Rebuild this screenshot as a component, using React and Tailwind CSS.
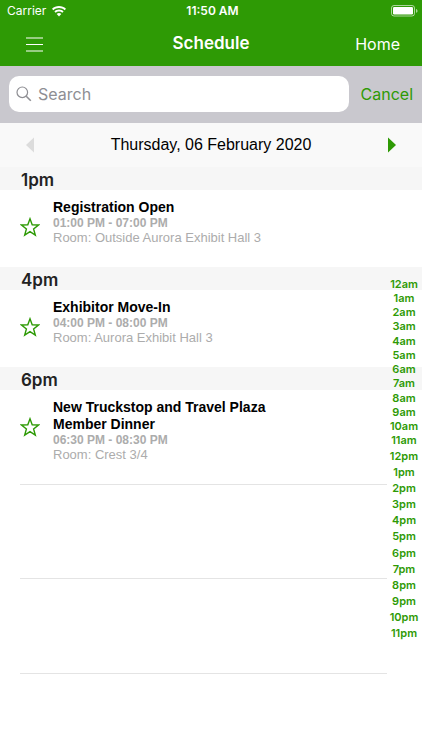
import { useState } from 'react';

const SECTIONS = [
  {
    label: '1pm',
    events: [{ id: 1, title: 'Registration Open', time: '01:00 PM - 07:00 PM', room: 'Outside Aurora Exhibit Hall 3' }],
  },
  {
    label: '4pm',
    events: [{ id: 2, title: 'Exhibitor Move-In', time: '04:00 PM - 08:00 PM', room: 'Aurora Exhibit Hall 3' }],
  },
  {
    label: '6pm',
    events: [{ id: 3, title: 'New Truckstop and Travel Plaza Member Dinner', time: '06:30 PM - 08:30 PM', room: 'Crest 3/4' }],
  },
];

const HOURS = [12, 1, 2, 3, 4, 5, 6, 7, 8, 9, 10, 11];

const StatusBar = () => (
  <div className="grid grid-cols-3 items-center h-[22px] pl-[7px] pr-1 text-xs">
    <div className="flex items-center gap-1.5">
      <span>Carrier</span>
      <svg width="14" height="11" viewBox="0 0 14 11" fill="currentColor">
        <path d="M7 0C4.3 0 1.9 1 0 2.8l1.3 1.4C2.9 2.8 4.9 2 7 2s4.1.8 5.7 2.2L14 2.8C12.1 1 9.7 0 7 0z" />
        <path d="M7 3.5c-1.8 0-3.4.7-4.6 1.9l1.3 1.4C4.6 5.9 5.7 5.4 7 5.4s2.4.5 3.3 1.4l1.3-1.4C10.4 4.2 8.8 3.5 7 3.5z" />
        <path d="M7 7c-.9 0-1.7.3-2.3.9L7 10.5l2.3-2.6C8.7 7.3 7.9 7 7 7z" />
      </svg>
    </div>
    <span className="text-center font-semibold whitespace-nowrap">11:50 AM</span>
    <svg className="justify-self-end" width="27" height="12" viewBox="0 0 27 12" fill="none">
      <rect x="0.5" y="0.5" width="23" height="10.5" rx="2.5" stroke="white" strokeOpacity="0.6" />
      <rect x="2" y="2" width="20" height="7.5" rx="1.2" fill="white" />
      <path d="M25 4c1 .3 1.5 1 1.5 1.9S26 7.5 25 7.8z" fill="white" fillOpacity="0.6" />
    </svg>
  </div>
);

const Event = ({ event, last }) => {
  const [starred, setStarred] = useState(false);
  return (
    <li className={last ? 'h-[94px] flex items-start pl-5' : 'h-[77px] flex items-start pl-5'}>
      <button
        type="button"
        aria-label={`Favorite ${event.title}`}
        onClick={() => setStarred(!starred)}
        className="shrink-0 flex items-center w-[33px] h-[73px]"
      >
        <svg width="20" height="20" viewBox="0 0 20 20" fill={starred ? '#2e9a05' : 'none'} stroke="#2e9a05" strokeWidth="1.4">
          <path d="M10 1.8l2.2 5.9 6.3.3-4.9 4 1.7 6.1L10 14.6l-5.3 3.5 1.7-6.1-4.9-4 6.3-.3z" />
        </svg>
      </button>
      <div className="w-[230px] pt-[9px] text-[#acacac]">
        <h3 className="text-sm leading-[17px] font-bold text-black">{event.title}</h3>
        <p className="text-xs leading-[15px] font-bold">{event.time}</p>
        <p className="text-[13px] leading-[14px] whitespace-nowrap">Room: {event.room}</p>
      </div>
    </li>
  );
};

const HourIndex = () => (
  <nav aria-label="Jump to hour" className="absolute inset-y-0 right-0 w-9 pt-px flex flex-col justify-center text-center text-[11px] leading-[14px] font-semibold text-[#2e9a05] font-['Inter',sans-serif]">
    <div className="grid grid-rows-12 h-[171px] items-center">
      {HOURS.map((h) => <a key={h} href={`#${h}am`}>{h}am</a>)}
    </div>
    <div className="grid grid-rows-12 h-[194px] items-center">
      {HOURS.map((h) => <a key={h} href={`#${h}pm`}>{h}pm</a>)}
    </div>
  </nav>
);

export default function App() {
  const [query, setQuery] = useState('');

  return (
    <div className="flex flex-col min-h-screen bg-white font-['Liberation_Sans',Arial,sans-serif]">
      <header className="bg-[#2e9a05] text-white font-['Inter',sans-serif]">
        <StatusBar />
        <div className="grid grid-cols-3 items-center h-11 px-[22px]">
          <button type="button" aria-label="Menu" className="w-5">
            <svg width="22" height="15" viewBox="0 0 22 15" stroke="currentColor" strokeWidth="1.2">
              <path d="M4 1h17M4 7.5h17M4 14h17" />
            </svg>
          </button>
          <h1 className="text-center text-[17px] font-semibold">Schedule</h1>
          <button type="button" className="justify-self-end text-base">Home</button>
        </div>
      </header>

      <div className="flex items-center gap-3 h-[57px] px-[9px] pb-0.5 bg-[#c9c8ce] text-base font-['Inter',sans-serif]">
        <label className="flex flex-1 items-center gap-1.5 h-9 px-[7px] rounded-[10px] bg-white text-[#8e8e93]">
          <svg width="16" height="16" viewBox="0 0 16 16" fill="none" stroke="currentColor" strokeWidth="1.2">
            <circle cx="6.3" cy="6.3" r="5.3" />
            <path d="M10.2 10.2l4.6 4.6" strokeWidth="1.6" />
          </svg>
          <input
            type="text"
            aria-label="Search"
            placeholder="Search"
            value={query}
            onChange={(e) => setQuery(e.target.value)}
            className="flex-1 min-w-0 outline-none placeholder:text-[#8e8e93]"
          />
        </label>
        <button type="button" className="text-[#2e9a05]">Cancel</button>
      </div>

      <div className="flex items-center justify-between h-11 px-[26px] bg-[#f9f9f9]">
        <button type="button" aria-label="Previous day" disabled>
          <svg width="8" height="16" viewBox="0 0 8 16" fill="#dcdcdc"><path d="M8 0.5v15L0 8z" /></svg>
        </button>
        <h2 className="text-base">Thursday, 06 February 2020</h2>
        <button type="button" aria-label="Next day">
          <svg width="8" height="16" viewBox="0 0 8 16" fill="#2e9a05"><path d="M0 0.5v15L8 8z" /></svg>
        </button>
      </div>

      <main className="relative flex-1">
        {SECTIONS.map((section, i) => (
          <section key={section.label} id={section.label}>
            <h2 className="h-[23px] pl-[21px] bg-[#f6f6f6] text-[17px] leading-[26px] font-semibold text-[#222] font-['Inter',sans-serif]">{section.label}</h2>
            <ul>
              {section.events.map((event) => <Event key={event.id} event={event} last={i === SECTIONS.length - 1} />)}
            </ul>
          </section>
        ))}
        {/* empty rows below the last event */}
        <div className="ml-5 mr-[35px] h-[95px] border-y border-[#e4e4e4]" />
        <div className="ml-5 mr-[35px] h-[95px] border-b border-[#e4e4e4]" />
        <HourIndex />
      </main>
    </div>
  );
}
